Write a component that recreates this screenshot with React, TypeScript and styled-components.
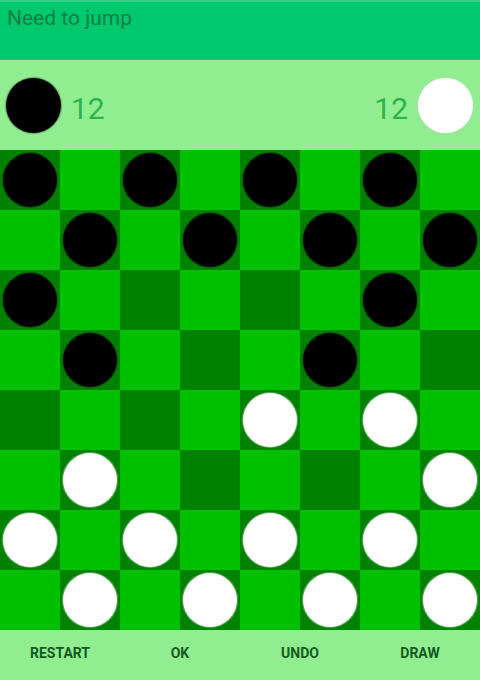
import React from 'react';
import styled, { createGlobalStyle } from 'styled-components';

const GlobalStyle = createGlobalStyle`
    html, body {
        margin: 0;
        padding: 0;
        background: #90ee90;
        font-family: Roboto, "Noto Sans", sans-serif;
    }
`;

const Screen = styled.div`
    width: 480px;
    height: 680px;
    display: flex;
    flex-direction: column;
    overflow: hidden;
`;

const TopBar = styled.div`
    height: 60px;
    box-sizing: border-box;
    background: #00c86c;
    border-top: 2px solid #2fd38a;
    padding: 4px 0 0 7px;
`;

const Status = styled.span`
    font-size: 21px;
    color: #128043;
`;

const ScoreBar = styled.div`
    height: 90px;
    background: #90ee90;
    display: flex;
    align-items: center;
    justify-content: space-between;
    padding: 0 7px 0 6px;
`;

const Player = styled.div`
    display: flex;
    align-items: center;
    gap: 10px;
`;

const Score = styled.span`
    font-size: 30px;
    color: #2cb34d;
    padding-top: 6px;
`;

const Board = styled.div`
    display: grid;
    grid-template-columns: repeat(8, 60px);
    grid-template-rows: repeat(8, 60px);
`;

const Cell = styled.div<{ $dark: boolean }>`
    background: ${(p) => (p.$dark ? '#008200' : '#00c000')};
    display: flex;
    align-items: center;
    justify-content: center;
`;

const Piece = styled.div<{ $color: 'b' | 'w'; $size?: number }>`
    width: ${(p) => p.$size ?? 54}px;
    height: ${(p) => p.$size ?? 54}px;
    border-radius: 50%;
    background: ${(p) => (p.$color === 'b' ? '#000' : '#fff')};
    box-shadow: 0 0 1px 1px ${(p) => (p.$color === 'b' ? 'rgba(0,0,0,0.3)' : 'rgba(200,220,200,0.5)')};
`;

const BottomBar = styled.div`
    flex: 1;
    background: #90ee90;
    display: grid;
    grid-template-columns: repeat(4, 1fr);
    align-items: center;
`;

const Action = styled.button`
    border: none;
    background: none;
    font-family: Roboto, "Noto Sans", sans-serif;
    font-size: 14px;
    font-weight: 700;
    color: #145a1f;
    text-transform: uppercase;
    padding: 0 0 4px;
`;

const layout = [
    'b.b.b.b.',
    '.b.b.b.b',
    'b.....b.',
    '.b...b..',
    '....w.w.',
    '.w.....w',
    'w.w.w.w.',
    '.w.w.w.w',
];

const App: React.FC = () => {
    return (
        <Screen>
            <GlobalStyle />
            <TopBar>
                <Status>Need to jump</Status>
            </TopBar>
            <ScoreBar>
                <Player>
                    <Piece $color="b" $size={55} />
                    <Score>12</Score>
                </Player>
                <Player>
                    <Score>12</Score>
                    <Piece $color="w" $size={55} />
                </Player>
            </ScoreBar>
            <Board>
                {layout.map((row, r) =>
                    row.split('').map((ch, c) => (
                        <Cell key={`${r}-${c}`} $dark={(r + c) % 2 === 0}>
                            {ch !== '.' && <Piece $color={ch as 'b' | 'w'} />}
                        </Cell>
                    ))
                )}
            </Board>
            <BottomBar>
                {['Restart', 'OK', 'Undo', 'Draw'].map((label) => (
                    <Action key={label}>{label}</Action>
                ))}
            </BottomBar>
        </Screen>
    );
};

export default App;
